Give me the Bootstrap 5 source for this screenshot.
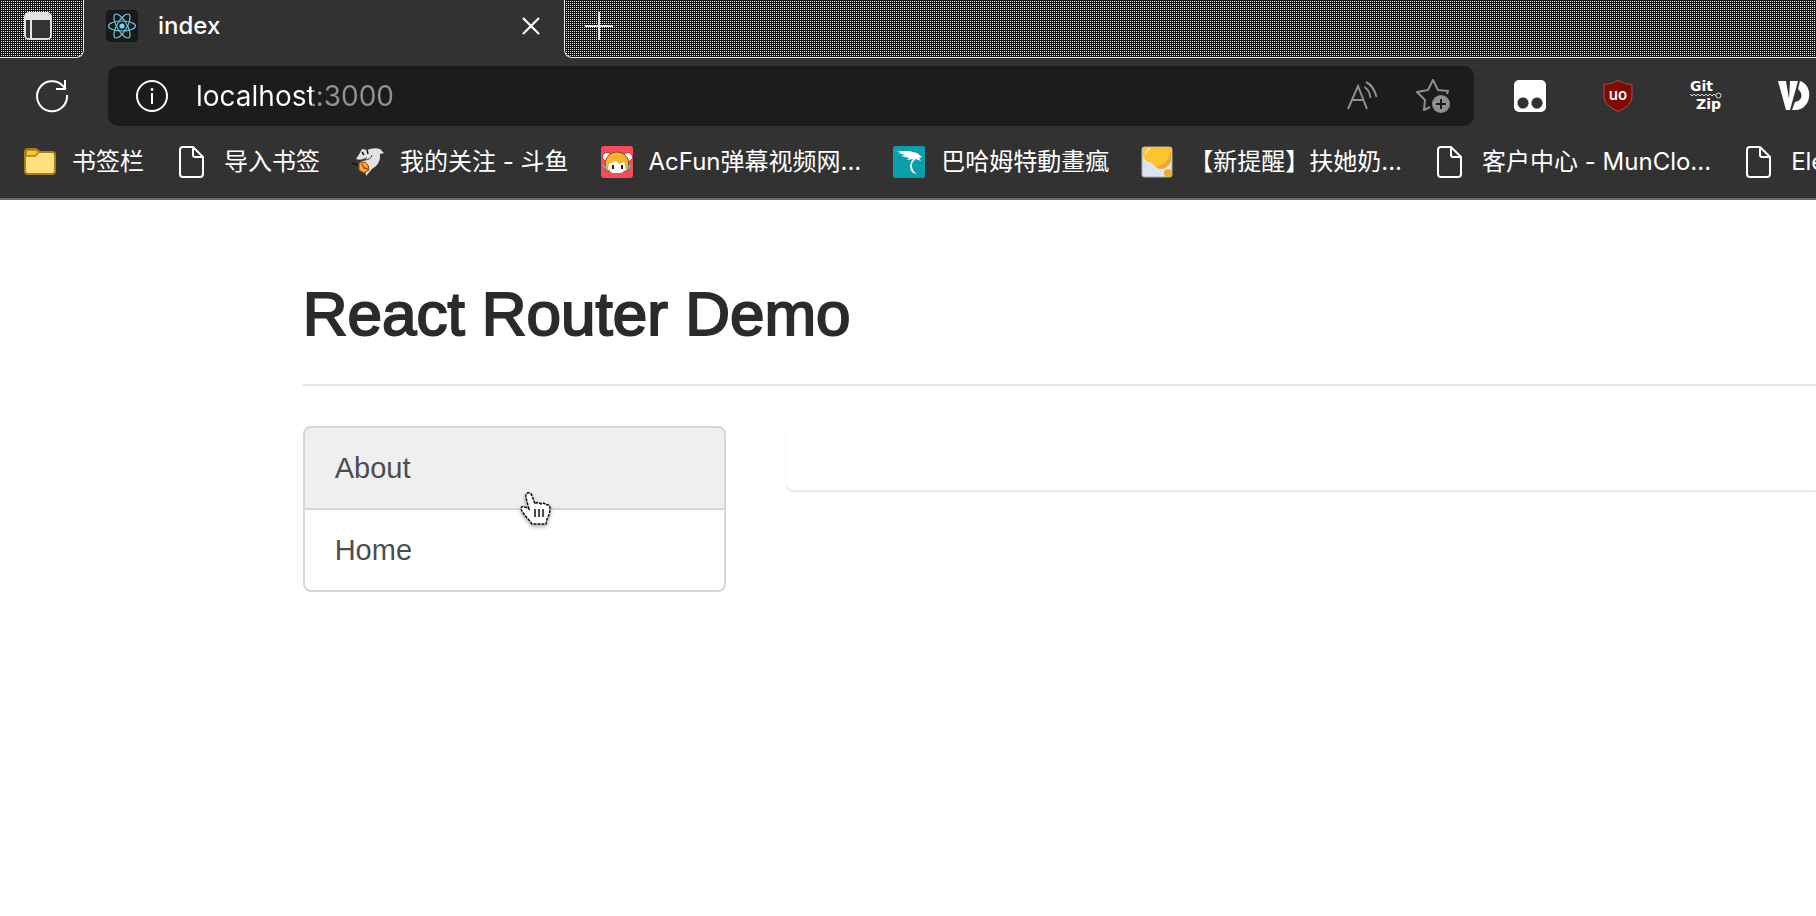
<!DOCTYPE html>
<html lang="zh-CN">
<head>
<meta charset="utf-8">
<meta name="viewport" content="width=device-width, initial-scale=1">
<title>index</title>
<link href="https://cdn.jsdelivr.net/npm/bootstrap@5.3.0/dist/css/bootstrap.min.css" rel="stylesheet">
<style>
body{font-family:"Liberation Sans",Arial,sans-serif;background:#fff;overflow-x:hidden}
.browser{background:repeating-linear-gradient(#353535 0 1px,#2f2f2f 1px 2px);color:#fff;font-family:Inter,"Noto Sans CJK SC",sans-serif;font-size:24px;line-height:32px;border-bottom:2px solid #686868;overflow:hidden}
.browser svg{display:block;flex:none;overflow:visible}
.browser button{background:none;border:0;padding:0;color:inherit;flex:none}
.strip{height:58px}
.dots{background-color:#141414;background-image:linear-gradient(90deg,#141414 1px,transparent 1px),linear-gradient(#141414 1px,#e8e8e8 1px);background-size:2px 2px;height:58px;padding-bottom:6px;border-bottom:1px solid #e8e8e8;color:#e4e4e4}
.dots-start{width:84px;padding-left:24px;border-right:1px solid #e8e8e8;border-bottom-right-radius:8px}
.dots-end{padding-left:20px;border-left:1px solid #e8e8e8;border-bottom-left-radius:8px}
.active-tab{width:480px;padding:0 24px 6px 22px;font-weight:500}
.tools{padding:8px 6px 0 36px;gap:40px}
.address{height:60px;background:#1c1c1c;border-radius:10px;padding:0 24px 0 28px}
.address input{border:0;outline:0;padding:0;min-width:0;font-size:28px;line-height:40px;color:transparent;background:linear-gradient(90deg,#fff 120px,#929292 120px);-webkit-background-clip:text;background-clip:text}
.address-actions{gap:38px}
.extensions{gap:56px}
.bookmarks{gap:32px;padding:20px 0 20px 24px}
.bookmarks a{color:#fff;text-decoration:none;white-space:nowrap;flex:none}
.demo h1{font-size:62px;line-height:68px;font-weight:400;-webkit-text-stroke:2px #2b2b2b;color:#2b2b2b;padding:80px 0 36px;margin:0 0 40px;border-bottom:2px solid #e5e5e5}
.demo .side{width:28%;flex:none}
.demo .list-group{--bs-list-group-border-width:2px;--bs-list-group-border-color:#d6d6d6;--bs-list-group-border-radius:8px;--bs-list-group-item-padding-x:30px;--bs-list-group-item-padding-y:20px;font-size:29px;line-height:40px}
.demo .list-group-item{color:#4d4d4d}
.demo .list-group-item.hovered{background:#efefef}
.demo .content{gap:60px}
.demo .result{height:64px;border-radius:8px 0 0 8px;box-shadow:0 2px 2px rgba(0,0,0,.1)}
.hand{left:216px;top:65px;z-index:5;filter:drop-shadow(0 2px 2px rgba(0,0,0,.35))}
</style>
</head>
<body>
<svg width="0" height="0" class="position-absolute" aria-hidden="true">
  <symbol id="page" viewBox="0 0 32 32"><path d="M7 1h10l10 10v17a3 3 0 0 1-3 3H7a3 3 0 0 1-3-3V4a3 3 0 0 1 3-3zM17 1.500v7.500a2 2 0 0 0 2 2h8" fill="none" stroke="#fff" stroke-width="2"/></symbol>
</svg>
<header class="browser">
  <div class="strip d-flex">
    <div class="dots dots-start d-flex align-items-center">
      <button aria-label="Tab actions"><svg width="28" height="28" viewBox="0 0 28 28"><rect width="28" height="28" rx="5" fill="#e4e4e4"/><path d="M2 8h4v18H4a2 2 0 0 1-2-2zM8 8h18v16a2 2 0 0 1-2 2H8z" fill="#333"/></svg></button>
    </div>
    <div class="active-tab d-flex align-items-center">
      <svg width="32" height="32" viewBox="0 0 32 32"><rect width="32" height="32" rx="4" fill="#191919"/><g fill="none" stroke="#6cc6dc" stroke-width="1.200"><ellipse cx="16" cy="16" rx="13.500" ry="5"/><ellipse cx="16" cy="16" rx="13.500" ry="5" transform="rotate(60 16 16)"/><ellipse cx="16" cy="16" rx="13.500" ry="5" transform="rotate(120 16 16)"/></g><circle cx="16" cy="16" r="2.600" fill="#61dafb"/></svg>
      <span class="ms-3 ps-1 me-auto">index</span>
      <button aria-label="Close tab"><svg width="18" height="18" viewBox="0 0 18 18"><path d="M1 1l16 16M17 1L1 17" stroke="#fff" stroke-width="2.200"/></svg></button>
    </div>
    <div class="dots dots-end d-flex align-items-center flex-grow-1">
      <button aria-label="New tab"><svg width="28" height="28" viewBox="0 0 28 28"><path d="M14 0v28M0 14h28" stroke="#e4e4e4" stroke-width="2"/></svg></button>
    </div>
  </div>
  <div class="tools d-flex align-items-center">
    <button aria-label="Reload"><svg width="32" height="32" viewBox="0 0 32 32"><path d="M31 15a15 15 0 1 1-4-9l3 3M29 0v9h-9" fill="none" stroke="#fff" stroke-width="2"/></svg></button>
    <div class="address d-flex align-items-center flex-grow-1">
      <button aria-label="Site information"><svg width="32" height="32" viewBox="0 0 32 32"><circle cx="16" cy="16" r="15" fill="none" stroke="#fff" stroke-width="2"/><path d="M16 13v11" stroke="#fff" stroke-width="2"/><circle cx="16" cy="9.500" r="1.400" fill="#fff"/></svg></button>
      <input class="flex-grow-1 mx-4 ps-1" type="text" aria-label="Address" value="localhost:3000">
      <div class="address-actions d-flex align-items-center">
        <button aria-label="Read aloud"><svg width="32" height="32" viewBox="0 0 32 32"><path d="M2 29L12 6l9 23M6 20h12M18.500 7q5 3 6 11M20 2q8 4 10.500 15" fill="none" stroke="#8f8f8f" stroke-width="2"/></svg></button>
        <button aria-label="Add to favorites"><svg width="34" height="34" viewBox="0 0 34 34"><path d="M31 15l1-3-10-1-5-10-5 10-11 2 8 8-1 10 6-3" fill="none" stroke="#8f8f8f" stroke-width="2" stroke-linejoin="round"/><circle cx="25" cy="25" r="9" fill="#8f8f8f"/><path d="M25 20v10M20 25h10" stroke="#1c1c1c" stroke-width="2"/></svg></button>
      </div>
    </div>
    <div class="extensions d-flex">
      <button aria-label="Tampermonkey"><svg width="32" height="32" viewBox="0 0 32 32"><rect width="32" height="32" rx="5" fill="#fff"/><g fill="#313131" stroke="#777" stroke-dasharray="1 2"><circle cx="9" cy="23" r="5.500"/><circle cx="23" cy="23" r="5.500"/></g></svg></button>
      <button aria-label="uBlock Origin"><svg width="32" height="32" viewBox="0 0 32 32"><path d="M16 .500q6 4 14 4V17q0 8-14 14.500Q2 25 2 17V4.500q8 0 14-4z" fill="#800900" stroke="#b04a48"/><text x="16" y="20" text-anchor="middle" font-family="Inter,sans-serif" font-weight="600" font-size="15" fill="#fff">uo</text></svg></button>
      <button aria-label="GitZip"><svg width="32" height="32" viewBox="0 0 32 32"><g fill="#fff" font-family="'DejaVu Sans',sans-serif" font-weight="700" font-size="14"><text x="0" y="11">Git</text><text x="6" y="29">Zip</text></g><path d="M0 14l2 2 2-2 2 2 2-2 2 2 2-2 2 2 2-2 2 2 2-2 2 2 2-2 2 2" fill="none" stroke="#ddd"/><circle cx="28.500" cy="15.500" r="2.500" fill="none" stroke="#ddd"/></svg></button>
      <button aria-label="Video downloader"><svg width="32" height="32" viewBox="0 0 32 32"><path d="M0 1h8l3 18 1-18h8l-8 29H8zM22 1c14 4 12 29-5 29h-3l3-8c8-1 8-9 3-13z" fill="#fff"/></svg></button>
    </div>
  </div>
  <nav class="bookmarks d-flex align-items-center" aria-label="Bookmarks">
    <a href="#" class="d-flex align-items-center gap-3"><svg width="32" height="32" viewBox="0 0 32 32"><path d="M1 6a3 3 0 0 1 3-3h8l4 3h12a3 3 0 0 1 3 3v16a3 3 0 0 1-3 3H4a3 3 0 0 1-3-3z" fill="#ffdf80" stroke="#a97e17" stroke-width="2"/><path d="M2 10V6a2 2 0 0 1 2-2h8l3 2-4 4z" fill="#ffc52e" stroke="#a97e17" stroke-width="1.300"/></svg>书签栏</a>
    <a href="#" class="d-flex align-items-center gap-3"><svg width="32" height="32"><use href="#page"/></svg>导入书签</a>
    <a href="#" class="d-flex align-items-center gap-3"><svg width="32" height="32" viewBox="0 0 32 32"><path d="M4 13Q8 7 10 3l5 1q7-3 13-1l4 4-4 1q1 10-8 15l-6 7-1-7-6-1 1-6q6-1 7-5-5 4-11 2z" fill="#e2e2e2"/><path d="M0 17l6 2M10 6l2 3M15 4l1 4" stroke="#151515" stroke-width="1.500"/><path d="M12 14q7 0 8-5" fill="none" stroke="#444"/><path d="M7 17l6-1 3 3 1 5-5 3-5-3z" fill="#ffad23" stroke="#8b4a14"/><path d="M10 18l2 4 4 1" fill="none" stroke="#bd391e" stroke-width="1.500"/></svg>我的关注 - 斗鱼</a>
    <a href="#" class="d-flex align-items-center gap-3"><svg width="32" height="32" viewBox="0 0 32 32"><rect width="32" height="32" rx="3" fill="#f94b59"/><g fill="#fff" stroke="#cc2541"><circle cx="6" cy="11" r="4.500"/><circle cx="27" cy="11" r="4.500"/></g><path d="M5 25L4 16Q7 6 16 6t12 10l-1 9z" fill="#f2b52d" stroke="#8c4522"/><path d="M8 18l7-3 3 3 5-2 2 8-5 3h-9l-4-4z" fill="#fff"/><path d="M12 19v4M21 19v4" stroke="#2a2020" stroke-width="2"/><path d="M2 19l4 4M30 19l-4 4" stroke="#38c4d6" stroke-width="2"/></svg>AcFun弹幕视频网...</a>
    <a href="#" class="d-flex align-items-center gap-3"><svg width="32" height="32" viewBox="0 0 32 32"><rect width="32" height="32" rx="2" fill="#0b9fae"/><path d="M3 5l13 0 8 2 5 4-3 1 2 3-5-2q-5 3-4 8 1 5 5 7-7-1-7-8 0-4 3-7l-6 1 2-2-8-2 4-1-7-2 4-1z" fill="#fff"/></svg>巴哈姆特動畫瘋</a>
    <a href="#" class="d-flex align-items-center gap-3"><svg width="32" height="32" viewBox="0 0 32 32"><rect x="1" y="1" width="30" height="30" rx="2" fill="#dce3f1" stroke="#aaa"/><path d="M2 2h28v13q-3 8-11 8-5-1-8-6-7-1-9-7z" fill="#fdc42e"/><path d="M30 5v10q-3 8-11 8l-4-2q12-3 15-16z" fill="#e9aa31"/><circle cx="27" cy="27" r="4" fill="#f1ad24"/><path d="M5 8q0-4 4-5" fill="none" stroke="#ffe985" stroke-width="2"/></svg>【新提醒】扶她奶...</a>
    <a href="#" class="d-flex align-items-center gap-3"><svg width="32" height="32"><use href="#page"/></svg>客户中心 - MunClo...</a>
    <a href="#" class="d-flex align-items-center gap-3"><svg width="32" height="32"><use href="#page"/></svg>Element</a>
  </nav>
</header>
<main class="demo container-fluid p-0">
  <div class="row g-0">
    <div class="col-10 offset-2">
      <h1>React Router Demo</h1>
      <div class="content d-flex">
        <div class="side position-relative">
          <div class="list-group">
            <a href="#about" class="list-group-item hovered">About</a>
            <a href="#home" class="list-group-item">Home</a>
          </div>
          <svg class="hand position-absolute" width="32" height="38" viewBox="0 0 32 38" aria-hidden="true"><path d="M10 18L7 7q-1-4 2-5t4 3l3 8q3-3 6 0 3-2 5 1 4-1 4 3 0 6-3 11l-1 5H13l-3-4Q4 23 2 18q0-5 8 0z" fill="#fff" stroke="#111" stroke-width="1.500" stroke-dasharray="3 1"/><path d="M16 18v8M20 18v8M24 18v8" stroke="#111" stroke-width="1.500"/></svg>
        </div>
        <section class="result flex-grow-1" aria-label="Result"></section>
      </div>
    </div>
  </div>
</main>
<script src="https://cdn.jsdelivr.net/npm/bootstrap@5.3.0/dist/js/bootstrap.bundle.min.js"></script>
</body>
</html>
